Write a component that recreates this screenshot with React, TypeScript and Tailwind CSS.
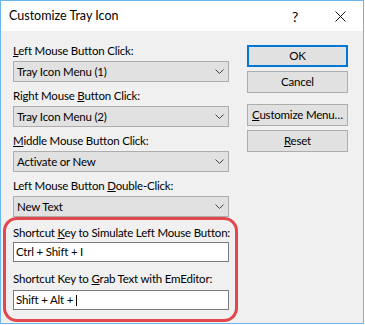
import { useState } from 'react'

const font = { fontFamily: 'Lato, "Noto Sans", sans-serif' }

const Chevron = () => (
  <svg width="9" height="5" viewBox="0 0 9 5" className="shrink-0">
    <polyline points="0.5,0.5 4.5,4.5 8.5,0.5" fill="none" stroke="#404040" strokeWidth="1" />
  </svg>
)

const Combo = ({ label, value }: { label: React.ReactNode; value: string }) => (
  <div className="flex flex-col">
    <div className="h-4 whitespace-nowrap leading-4">{label}</div>
    <div className="mt-[2px] flex h-[21px] items-center justify-between border border-[#adadad] bg-[#e1e1e1] pl-[3px] pr-[4px]">
      <span className="whitespace-nowrap">{value}</span>
      <Chevron />
    </div>
  </div>
)

const Button = ({ children, primary }: { children: React.ReactNode; primary?: boolean }) => (
  <div
    className={`flex h-[22px] w-[101px] items-center justify-center whitespace-nowrap bg-[#e1e1e1] ${
      primary ? 'border-2 border-[#0078d7]' : 'border border-[#adadad]'
    }`}
  >
    {children}
  </div>
)

export default function App() {
  const [grab] = useState('Shift + Alt + ')

  return (
    <div className="h-[325px] w-[365px] bg-white text-[11.5px] tracking-[-0.2px] text-black" style={font}>
      <div className="relative flex h-[324px] w-[364px] flex-col border border-[#6db6ec]">
        {/* title bar */}
        <div className="flex h-[30px] items-center bg-white pl-2">
          <span className="flex-1 whitespace-nowrap pt-[1px] text-[12.5px] tracking-normal">Customize Tray Icon</span>
          <span className="mr-[37px] text-[14px]">?</span>
          <svg width="11" height="11" viewBox="0 0 11 11" className="mr-[17px]">
            <path d="M0.5 0.5 L10.5 10.5 M10.5 0.5 L0.5 10.5" stroke="#111" strokeWidth="1" />
          </svg>
        </div>

        {/* body */}
        <div className="flex flex-1 bg-[#f0f0f0] pl-3 pt-3">
          <div className="flex w-[216px] flex-col gap-[6px]">
            <Combo label={<><u>L</u>eft Mouse Button Click:</>} value="Tray Icon Menu (1)" />
            <Combo label={<>Right Mouse <u>B</u>utton Click:</>} value="Tray Icon Menu (2)" />
            <Combo label={<><u>M</u>iddle Mouse Button Click:</>} value="Activate or New" />
            <Combo label={<>Left Mouse Button <u>D</u>ouble-Click:</>} value="New Text" />

            <div className="mt-[2px] flex flex-col">
              <div className="h-4 whitespace-nowrap leading-4">
                Shortcut <u>K</u>ey to Simulate Left Mouse Button:
              </div>
              <div className="mt-[1px] flex h-[20px] items-center whitespace-nowrap border border-[#7a7a7a] bg-white pl-[2px]">
                Ctrl + Shift + I
              </div>
            </div>
            <div className="mt-[3px] flex flex-col">
              <div className="h-4 whitespace-nowrap leading-4">
                Shortcut Key to <u>G</u>rab Text with EmEditor:
              </div>
              <div className="mt-[3px] flex h-[20px] items-center border border-[#7a7a7a] bg-white pl-[2px]">
                <span className="whitespace-pre">{grab}</span>
                <span className="h-[11px] w-[1px] bg-black" />
              </div>
            </div>
          </div>

          <div className="ml-[18px] flex flex-col pt-[2px]">
            <Button primary>OK</Button>
            <div className="mt-1">
              <Button>Cancel</Button>
            </div>
            <div className="mt-[11px]">
              <Button>
                <span>
                  <u>C</u>ustomize Menu…
                </span>
              </Button>
            </div>
            <div className="mt-1">
              <Button>
                <span>
                  <u>R</u>eset
                </span>
              </Button>
            </div>
          </div>
        </div>

        {/* annotation highlight */}
        <div className="pointer-events-none absolute left-[2px] top-[216px] h-[105px] w-[235px] rounded-[14px] border-[3px] border-[#e2474d]" />
      </div>
    </div>
  )
}
